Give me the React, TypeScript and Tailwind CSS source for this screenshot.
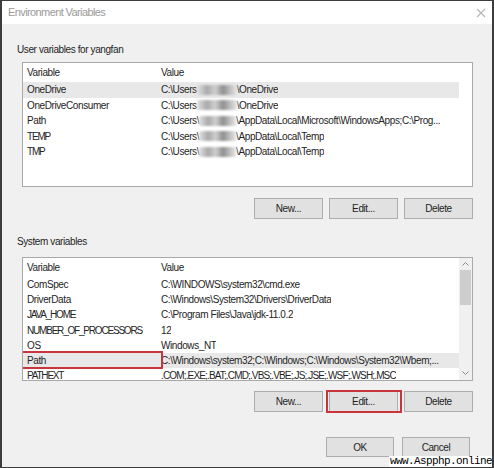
import React from "react";

const F = "font-['Liberation_Sans',Arial,sans-serif]";

function Blob({ w }: { w: string }) {
  return (
    <span
      className={`inline-block h-[10px] ${w} bg-[linear-gradient(90deg,#e2e2e2,#a9a9a9_25%,#d0d0d0_45%,#8f8f8f_65%,#c4c4c4_85%,#e6e6e6)] blur-[1px]`}
    />
  );
}

type RowProps = {
  name: string;
  value: React.ReactNode;
  h: string;
  sel?: boolean;
  red?: boolean;
  caps?: boolean;
  vcaps?: boolean;
};

function Row({ name, value, h, sel, red, caps, vcaps }: RowProps) {
  return (
    <div className={`relative flex items-center ${h} ${sel ? "bg-[#e8e8e8]" : ""}`}>
      <div
        className={`w-[134px] shrink-0 pl-[4px] whitespace-nowrap ${caps ? "tracking-[-1.2px]" : ""}`}
      >
        {name}
      </div>
      <div
        className={`flex items-center pl-[4px] whitespace-nowrap overflow-hidden ${vcaps ? "tracking-[-0.85px]" : ""}`}
      >
        {value}
      </div>
      {red && (
        <div className="absolute -left-[2px] -top-[2px] w-[142px] h-[18px] border-2 border-[#c8363c]" />
      )}
    </div>
  );
}

function Btn({ label, red }: { label: string; red?: boolean }) {
  return (
    <div className="relative">
      <div className="w-[69px] h-[21px] flex items-center justify-center bg-[#e1e1e1] border border-[#adadad] text-[#1e1e1e]">
        {label}
      </div>
      {red && (
        <div className="absolute -left-[3px] -right-[4px] -top-[1px] -bottom-[1px] border-2 border-[#c8363c]" />
      )}
    </div>
  );
}

function Header() {
  return (
    <div className="flex items-center h-[19px]">
      <div className="w-[134px] shrink-0 pl-[4px]">Variable</div>
      <div className="pl-[4px]">Value</div>
    </div>
  );
}

function Chevron({ up }: { up?: boolean }) {
  return (
    <svg width="7" height="4" viewBox="0 0 7 4">
      <path
        d={up ? "M0.5 3.5 L3.5 0.5 L6.5 3.5" : "M0.5 0.5 L3.5 3.5 L6.5 0.5"}
        fill="none"
        stroke="#8a8a8a"
        strokeWidth="1"
      />
    </svg>
  );
}

export default function App() {
  return (
    <div
      className={`relative w-[494px] h-[468px] bg-[#f0f0f0] border-t border-b border-l-2 border-r-2 border-[#3c3c3c] text-[10px] tracking-[-0.4px] text-[#242424] ${F} overflow-hidden`}
    >
      {/* title bar */}
      <div className="h-[23px] bg-white flex items-center justify-between pl-[6px] pr-[6px]">
        <span className="text-[#9a9a9a] text-[11px] tracking-[-0.6px]">Environment Variables</span>
        <svg width="10" height="10" viewBox="0 0 10 10">
          <path d="M1 1 L9 9 M9 1 L1 9" stroke="#b5b5b5" strokeWidth="1.1" />
        </svg>
      </div>

      {/* body */}
      <div className="pl-[15px] pt-[18px] flex flex-col">
        <div className="leading-[16px] h-[16px]">User variables for yangfan</div>

        <div className="mt-[4px] ml-[5px] w-[451px] h-[125px] bg-white border border-[#a9a9a9] overflow-hidden">
          <div className="w-[436px]">
            <Header />
            <Row
              h="h-[15.5px]"
              sel
              name="OneDrive"
              value={
                <>
                  <span>C:\Users</span>
                  <Blob w="w-[40px]" />
                  <span>\OneDrive</span>
                </>
              }
            />
            <Row
              h="h-[15.5px]"
              name="OneDriveConsumer"
              value={
                <>
                  <span>C:\Users</span>
                  <Blob w="w-[40px]" />
                  <span>\OneDrive</span>
                </>
              }
            />
            <Row
              h="h-[15.5px]"
              name="Path"
              value={
                <>
                  <span>C:\Users\</span>
                  <Blob w="w-[37px]" />
                  <span>\AppData\Local\Microsoft\WindowsApps;C:\Prog...</span>
                </>
              }
            />
            <Row
              h="h-[15.5px]"
              caps
              name="TEMP"
              value={
                <>
                  <span>C:\Users\</span>
                  <Blob w="w-[37px]" />
                  <span>\AppData\Local\Temp</span>
                </>
              }
            />
            <Row
              h="h-[15.5px]"
              caps
              name="TMP"
              value={
                <>
                  <span>C:\Users\</span>
                  <Blob w="w-[37px]" />
                  <span>\AppData\Local\Temp</span>
                </>
              }
            />
          </div>
        </div>

        <div className="mt-[11px] ml-[5px] w-[451px] flex justify-end gap-[6px]">
          <Btn label="New..." />
          <Btn label="Edit..." />
          <Btn label="Delete" />
        </div>

        <div className="mt-[15px] leading-[16px] h-[16px]">System variables</div>

        <div className="mt-[7px] ml-[5px] w-[451px] h-[124px] bg-white border border-[#a9a9a9] overflow-hidden flex">
          <div className="w-[436px] shrink-0 overflow-hidden">
            <Header />
            <Row h="h-[15.2px]" name="ComSpec" value="C:\WINDOWS\system32\cmd.exe" />
            <Row h="h-[15.2px]" name="DriverData" value="C:\Windows\System32\Drivers\DriverData" />
            <Row h="h-[15.2px]" caps name="JAVA_HOME" value="C:\Program Files\Java\jdk-11.0.2" />
            <Row h="h-[15.2px]" caps name="NUMBER_OF_PROCESSORS" value="12" />
            <Row h="h-[15.2px]" name="OS" value="Windows_NT" />
            <Row
              h="h-[15.2px]"
              sel
              red
              name="Path"
              value="C:\Windows\system32;C:\Windows;C:\Windows\System32\Wbem;..."
            />
            <Row
              h="h-[15.2px]"
              caps
              vcaps
              name="PATHEXT"
              value=".COM;.EXE;.BAT;.CMD;.VBS;.VBE;.JS;.JSE;.WSF;.WSH;.MSC"
            />
          </div>
          <div className="w-[13px] shrink-0 bg-[#f0f0f0] flex flex-col items-center">
            <div className="h-[12px] flex items-center justify-center">
              <Chevron up />
            </div>
            <div className="w-[11px] h-[35px] bg-[#cdcdcd]" />
            <div className="flex-1" />
            <div className="h-[14px] flex items-center justify-center">
              <Chevron />
            </div>
          </div>
        </div>

        <div className="mt-[10px] ml-[5px] w-[451px] flex justify-end gap-[6px]">
          <Btn label="New..." />
          <Btn label="Edit..." red />
          <Btn label="Delete" />
        </div>

        <div className="mt-[25px] ml-[5px] w-[451px] pr-[3px] flex justify-end gap-[8px]">
          <div className="w-[68px] h-[20px] flex items-center justify-center bg-[#e1e1e1] border border-[#adadad]">
            OK
          </div>
          <div className="w-[68px] h-[20px] flex items-center justify-center bg-[#e1e1e1] border border-[#adadad]">
            Cancel
          </div>
        </div>
      </div>

      {/* watermark */}
      <div className="absolute right-0 bottom-0 h-[11px] bg-white pl-[1px] flex items-center font-['Liberation_Mono',monospace] text-[11px] tracking-[-0.6px] text-black leading-[11px]">
        www.Aspphp.online
      </div>
    </div>
  );
}
